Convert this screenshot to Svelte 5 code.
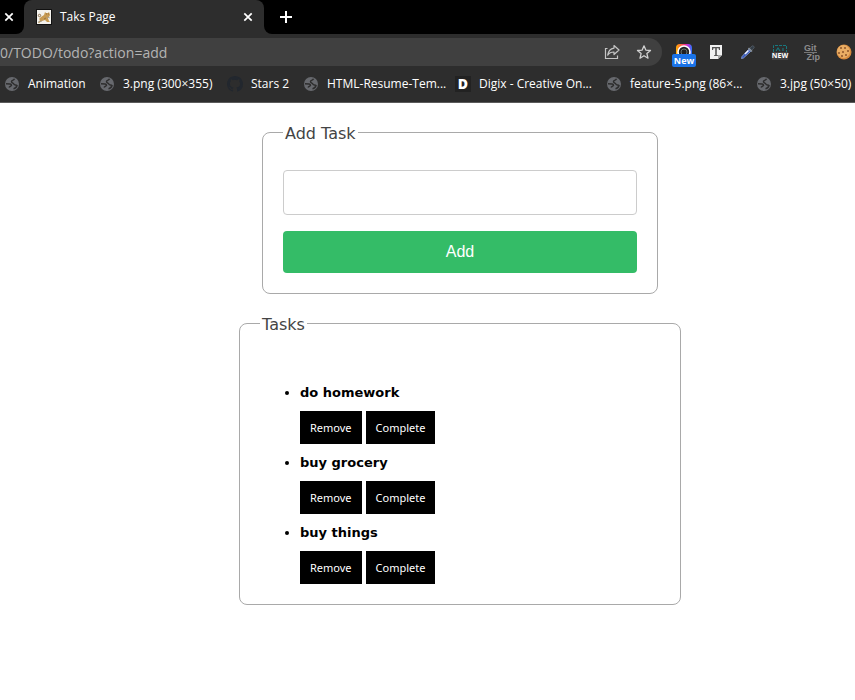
<script>
  const bookmarks = [
    { title: 'Animation', icon: 'globe' },
    { title: '3.png (300×355)', icon: 'globe' },
    { title: 'Stars 2', icon: 'github' },
    { title: 'HTML-Resume-Tem...', icon: 'globe' },
    { title: 'Digix - Creative On...', icon: 'digix' },
    { title: 'feature-5.png (86×...', icon: 'globe' },
    { title: '3.jpg (50×50)', icon: 'globe' }
  ];
  let tasks = $state(['do homework', 'buy grocery', 'buy things']);
  let draft = $state('');

  function add(event) {
    event.preventDefault();
    if (draft.trim()) tasks.push(draft.trim());
    draft = '';
  }
  function remove(index) {
    tasks.splice(index, 1);
  }
</script>

{#snippet cross()}
  <svg width="10" height="10" viewBox="0 0 10 10" aria-hidden="true">
    <path d="M1.3 1.3l7.4 7.4M8.7 1.3L1.3 8.7" stroke="#fff" stroke-width="1.7" />
  </svg>
{/snippet}

<header class="browser">
  <div class="tabs">
    <div class="previous"><button class="plain" aria-label="Close previous tab">{@render cross()}</button></div>
    <div class="tab">
      <svg width="16" height="16" viewBox="0 0 16 16" aria-hidden="true">
        <rect width="16" height="16" fill="#111" />
        <rect x="1" y="1" width="14" height="14" fill="#f4f2ed" />
        <path d="M8 6l1-3 1 1h2l1-1 1 3-1 2-1 1 1 3 1 1h-3l-2-2-3 1-3 2H2l2-3-1-1 2-2z" fill="#c79a52" />
        <path d="M2 6l2-1 1 2-2 1zM10 5h1M12 5h1M8 10l2-1" stroke="#80603a" stroke-width=".7" fill="none" />
        <path d="M2 13l4-1M11 8l3 1" stroke="#9c9a94" stroke-width=".8" />
      </svg>
      <span class="tabtitle">Taks Page</span>
      <button class="plain" aria-label="Close tab">{@render cross()}</button>
    </div>
    <button class="plain newtab" aria-label="New tab">
      <svg width="12" height="12" viewBox="0 0 12 12"><path d="M6 0v12M0 6h12" stroke="#fff" stroke-width="2" /></svg>
    </button>
  </div>

  <div class="toolbar">
    <div class="address">
      <input class="url" aria-label="Address" value="0/TODO/todo?action=add" />
      <button class="plain" aria-label="Share">
        <svg width="16" height="16" viewBox="0 0 16 16" fill="none" stroke="#c5c5c5" stroke-width="1.2">
          <path d="M3.5 4.500H1.500v10h12v-3" />
          <path d="M10 1.500l5 4.500-5 4.500V8C7 8 5 9 3.700 11.200 4.200 7.500 6.300 4.600 10 4.100z" stroke-linejoin="round" />
        </svg>
      </button>
      <button class="plain" aria-label="Bookmark this page">
        <svg width="16" height="16" viewBox="0 0 16 16" fill="none" stroke="#d0d0d0" stroke-width="1.3">
          <path d="M8 1.800l1.800 4.300 4.700.4-3.600 3.100 1.100 4.600L8 11.700l-4 2.500 1.100-4.600-3.600-3.100 4.700-.4z" stroke-linejoin="round" />
        </svg>
      </button>
    </div>
    <div class="extensions">
      <button class="plain camera" aria-label="Capture extension, new">
        <svg width="18" height="18" viewBox="0 0 18 18">
          <defs>
            <linearGradient id="rainbow"><stop stop-color="#ffb100" /><stop offset=".3" stop-color="#ff653c" /><stop offset=".55" stop-color="#f42986" /><stop offset=".8" stop-color="#a53cf0" /><stop offset="1" stop-color="#237bf5" /></linearGradient>
          </defs>
          <rect x="1" y="1" width="16" height="16" rx="4" fill="url(#rainbow)" />
          <circle cx="9" cy="9" r="6" fill="#222" stroke="#fff" stroke-width="1.600" />
          <circle cx="9" cy="9" r="3" fill="#222" stroke="#68716f" stroke-width="1" />
        </svg>
        <span class="badge">New</span>
      </button>
      <button class="plain" aria-label="Text extension">
        <svg width="16" height="16" viewBox="0 0 16 16">
          <path d="M2 1h12v10l-4 4H2z" fill="#f1f1f1" /><path d="M14 11h-4v4z" fill="#aaa" />
          <path d="M4 3h8v3h-1L10.500 4.300H8.800V11l1.200.3v.7H6v-.7l1.200-.3V4.300H5.500L5 6H4z" fill="#555" />
        </svg>
      </button>
      <button class="plain" aria-label="Colour picker">
        <svg width="16" height="16" viewBox="0 0 16 16">
          <path d="M9 5l3-3c1-1 3 1 2 2l-3 3z" fill="#343d46" stroke="#56616b" stroke-width=".7" />
          <path d="M8.500 4l3.500 3.500" stroke="#8a949e" stroke-width="1.600" />
          <path d="M8.500 5.500L2 12.500 1.500 14.500 3.500 14 10.500 7.500z" fill="#3457bd" stroke="#9db4eb" stroke-width=".7" />
          <path d="M8.500 6.500L5 10" stroke="#eef2ff" stroke-width="1.500" />
        </svg>
      </button>
      <button class="plain sketch" aria-label="Layout extension, new">
        <svg width="16" height="8" viewBox="0 0 16 8" fill="none" stroke="#18777d" aria-hidden="true">
          <path d="M1.500 8V1.500h13V8" stroke-dasharray="3 1" /><path d="M4 7l2-3 2 3M11 4v3" stroke-width="1.100" />
        </svg>
        <span>NEW</span>
      </button>
      <button class="plain gitzip"><span>Git</span><span>Zip</span></button>
      <button class="plain" aria-label="Cookies">
        <svg width="16" height="16" viewBox="0 0 16 16">
          <circle cx="8" cy="8" r="7.500" fill="#d68a3d" /><circle cx="7.500" cy="7.500" r="6.500" fill="#e9ad64" />
          <g fill="#8d5429"><circle cx="5" cy="4" r="1" /><circle cx="9" cy="4" r="1" /><circle cx="12" cy="7" r="1" /><circle cx="7" cy="8" r="1" /><circle cx="3" cy="9" r="1" /><circle cx="10" cy="11" r="1" /><circle cx="6" cy="12" r="1" /></g>
        </svg>
      </button>
    </div>
  </div>

  <nav class="bookmarks" aria-label="Bookmarks">
    {#each bookmarks as bookmark}
      <a href="#bookmark">
        {#if bookmark.icon === 'globe'}
          <svg width="16" height="16" viewBox="0 0 16 16" aria-hidden="true">
            <circle cx="8" cy="8" r="7" fill="#67696e" />
            <path d="M10.500 2.800C9.500 5 7.500 3.800 7.500 5.500S9.500 7 10 8.200s2 .3 3 1.300c-.5 2-2 3-3.500 3.300" fill="none" stroke="#2d2d2d" stroke-width="1.500" />
            <path d="M2 7.800l4 .2c1 .1 2 1 1.200 1.700-.7.700-1.700.8-2.200 1.800" fill="none" stroke="#2d2d2d" stroke-width="1.500" />
          </svg>
        {:else if bookmark.icon === 'github'}
          <svg width="16" height="16" viewBox="0 0 16 16" aria-hidden="true">
            <path fill="#22272e" d="M8 0C3.580 0 0 3.580 0 8c0 3.540 2.290 6.530 5.470 7.590.4.070.55-.17.55-.38 0-.19-.01-.82-.01-1.490-2.010.37-2.530-.49-2.690-.94-.09-.23-.48-.94-.82-1.130-.28-.15-.68-.52-.01-.53.63-.01 1.080.58 1.230.82.72 1.210 1.870.87 2.330.66.070-.52.28-.87.51-1.070-1.780-.2-3.640-.89-3.640-3.950 0-.87.31-1.590.82-2.150-.08-.2-.36-1.020.08-2.120 0 0 .67-.21 2.200.82a7.600 7.600 0 0 1 4 0c1.530-1.040 2.200-.82 2.200-.82.44 1.100.16 1.920.08 2.120.51.56.82 1.270.82 2.150 0 3.070-1.870 3.750-3.650 3.950.29.25.54.73.54 1.480 0 1.070-.01 1.930-.01 2.200 0 .21.15.46.55.38A8 8 0 0 0 16 8c0-4.420-3.580-8-8-8z" />
          </svg>
        {:else}
          <span class="digix" aria-hidden="true">D</span>
        {/if}
        <span>{bookmark.title}</span>
      </a>
    {/each}
  </nav>
</header>

<main>
  <form onsubmit={add}>
    <fieldset>
      <legend>Add Task</legend>
      <input class="entry" aria-label="Task" bind:value={draft} />
      <button class="add">Add</button>
    </fieldset>
  </form>
  <fieldset class="tasks">
    <legend>Tasks</legend>
    <ul>
      {#each tasks as task, index}
        <li>
          <strong>{task}</strong>
          <div class="actions">
            <button onclick={() => remove(index)}>Remove</button>
            <button>Complete</button>
          </div>
        </li>
      {/each}
    </ul>
  </fieldset>
</main>

<style>
  :global(body) { margin: 0; background: #fff; }
  * { box-sizing: border-box; }
  button, input { margin: 0; border: 0; font-family: inherit; }
  .plain { display: flex; align-items: center; justify-content: center; padding: 0; background: none; color: #fff; flex: none; }
  .browser { background: #2d2d2d; border-bottom: 1px solid #5b5b5b; font: 12px/16px "Segoe UI", "Open Sans", sans-serif; color: #fff; overflow: hidden; }
  .tabs { display: flex; height: 34px; background: linear-gradient(#000 24px, #2d2d2d 24px); }
  .previous { display: flex; width: 24px; padding-left: 4px; align-items: center; background: #000; border-bottom-right-radius: 8px; }
  .tab { display: flex; align-items: center; width: 240px; padding: 0 11px 0 12px; background: #2d2d2d; border-radius: 8px 8px 0 0; }
  .tabtitle { flex: 1; margin-left: 8px; }
  .tabs .newtab { flex: 1; justify-content: flex-start; padding-left: 16px; background: #000; border-bottom-left-radius: 8px; }
  .toolbar { display: flex; align-items: center; height: 36px; }
  .address { display: flex; align-items: center; gap: 16px; flex: 1; height: 28px; padding-right: 10px; background: #404040; border-radius: 0 14px 14px 0; }
  .url { flex: 1; min-width: 0; padding: 0; background: none; color: #b4b4b4; font-size: 14px; }
  .extensions { display: flex; align-items: center; gap: 16px; padding: 0 3px 0 9px; }
  .extensions button { width: 16px; height: 20px; }
  .extensions .camera { position: relative; width: 26px; margin-right: -5px; }
  .badge { position: absolute; top: 12px; left: 1px; width: 24px; height: 13px; border-radius: 2px; background: #1a73e8; font: bold 9px/13px "Open Sans", sans-serif; }
  .extensions .sketch { flex-direction: column; }
  .sketch span { font: bold 7px/8px "Open Sans", sans-serif; background: #414141; }
  .extensions .gitzip { flex-direction: column; color: #8c8c8c; font: bold 9px/8px "Liberation Sans", sans-serif; }
  .gitzip span:first-child { align-self: flex-start; border-bottom: 1px solid #777; }
  .gitzip span:last-child { align-self: flex-end; }
  .bookmarks { display: grid; grid-template-columns: 95px 128px 76px 152px 151px 150px 98px; height: 32px; padding-left: 4px; padding-bottom: 4px; }
  .bookmarks a { display: flex; align-items: center; gap: 8px; color: #fff; text-decoration: none; white-space: nowrap; }
  .bookmarks svg, .digix { flex: none; }
  .digix { width: 16px; height: 16px; background: #222; text-align: center; font: 900 14px/16px "Open Sans", sans-serif; }
  main { padding: 18px 0 20px 65px; font-family: Verdana, "DejaVu Sans", sans-serif; }
  form { width: 396px; max-width: 100%; margin: 0 auto 18px; }
  fieldset { min-width: 0; margin: 0; padding: 27px 20px 20px; border: 1px solid #a9a9a9; border-radius: 8px; }
  legend { padding: 4px 2px 0; color: #444; font-size: 16px; line-height: 18px; }
  .entry { display: block; width: 100%; height: 45px; padding: 12px; border: 1px solid #ccc; border-radius: 4px; font-size: 16px; }
  .add { display: block; width: 100%; height: 42px; margin-top: 16px; border-radius: 4px; background: #34bc67; color: #fff; font: 16px "Liberation Sans", Arial, sans-serif; }
  .tasks { width: 442px; max-width: 100%; margin: 0 auto; padding: 49px 20px 20px; }
  ul { margin: 0; padding: 0 0 0 40px; font-size: 13px; line-height: 20px; }
  li + li { margin-top: 9px; }
  strong { display: block; }
  .actions { display: flex; gap: 4px; margin-top: 8px; }
  .actions button { height: 33px; padding: 0 10px; background: #000; color: #fff; font: 11px Tahoma, "Noto Sans", sans-serif; }
</style>
